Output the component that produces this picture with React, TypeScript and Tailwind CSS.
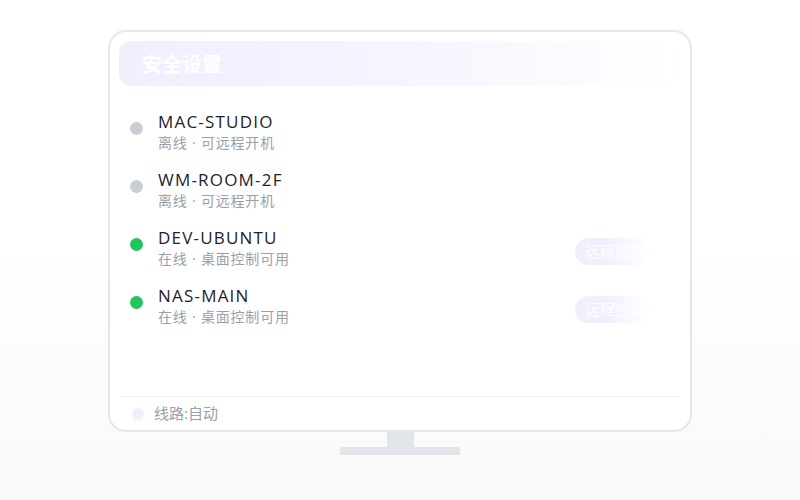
const devices = [
  { name: 'MAC-STUDIO', status: '离线 · 可远程开机', online: false },
  { name: 'WM-ROOM-2F', status: '离线 · 可远程开机', online: false },
  { name: 'DEV-UBUNTU', status: '在线 · 桌面控制可用', online: true },
  { name: 'NAS-MAIN', status: '在线 · 桌面控制可用', online: true },
];

export default function App() {
  return (
    <div
      className="w-[800px] h-[500px] bg-gradient-to-b from-white from-45% to-[#f9f9fa] flex flex-col items-center pt-[30px]"
      style={{ fontFamily: '"Open Sans", "Noto Sans CJK SC", sans-serif' }}
    >
      <div className="w-[584px] h-[402px] rounded-[18px] border-2 border-[#e6e7ea] bg-white flex flex-col px-[9px] pt-[9px]">
        <div className="h-[45px] rounded-[12px] bg-gradient-to-r from-[#f1eefe] via-[#f6f4ff] to-white flex items-center pl-[23px] pt-[3px]">
          <span className="text-[20px] font-bold text-white">安全设置</span>
        </div>
        <div className="flex-1 flex flex-col pt-[25px]">
          {devices.map((d) => (
            <div key={d.name} className="h-[58px] flex items-start">
              <div
                className={`w-[13px] h-[13px] rounded-full mt-[11px] ml-[11px] ${
                  d.online ? 'bg-[#22c55e]' : 'bg-[#c9cdd4]'
                }`}
              />
              <div className="ml-[15px] flex flex-col">
                <span className="text-[17px] leading-[22px] text-[#1f2329] tracking-[1.2px]">{d.name}</span>
                <span className="text-[14px] leading-[20px] text-[#9aa0a8] tracking-[0.8px]">{d.status}</span>
              </div>
              {d.online && (
                <div className="ml-auto mr-[30px] mt-[11px] w-[76px] h-[27px] rounded-full bg-gradient-to-r from-[#f1eefe] from-40% to-white flex items-center pl-[10px] overflow-hidden">
                  <span className="text-[15px] text-white whitespace-nowrap">远程控制</span>
                </div>
              )}
            </div>
          ))}
        </div>
        <div className="mx-[2px] border-t border-[#eef0f3] h-[34px] flex items-center">
          <div className="w-[12px] h-[12px] rounded-full bg-[#f0edfe] ml-[11px]" />
          <span className="ml-[10px] text-[15px] text-[#9aa0a8]">线路:自动</span>
        </div>
      </div>
      <div className="w-[27px] h-[15px] bg-[#e2e5e9]" />
      <div className="w-[120px] h-[8px] bg-[#e2e5e9]" />
    </div>
  );
}
